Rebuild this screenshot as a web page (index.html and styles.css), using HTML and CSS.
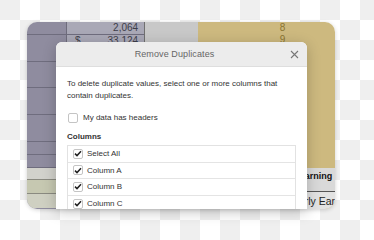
FILE: index.html
```html
<!DOCTYPE html>
<html>
<head>
<meta charset="utf-8">
<link rel="stylesheet" href="styles.css">
</head>
<body>
<div class="stage">
  <div class="sheet">
    <div class="col c1">
      <div class="cell h13"></div>
      <div class="cell h27"></div>
      <div class="cell h26"></div>
      <div class="cell h27"></div>
      <div class="cell h27"></div>
      <div class="cell h13"></div>
      <div class="cell h13"></div>
      <div class="cell h13 g1"></div>
      <div class="cell h14 g2"></div>
      <div class="cell h14 g3"></div>
    </div>
    <div class="col c2">
      <div class="cell h13 num">2,064</div>
      <div class="cell h13 num"><span class="cur">$</span>33,124</div>
    </div>
    <div class="col c3"></div>
    <div class="col c4">
      <div class="yellow">
        <div class="ynum">8</div>
        <div class="ynum">9</div>
      </div>
      <div class="foot1">Earning</div>
      <div class="foot2">Early Ear</div>
    </div>
  </div>

  <div class="dialog">
    <div class="dhead">
      <span class="dtitle">Remove Duplicates</span>
      <span class="dclose">
        <svg width="9" height="9" viewBox="0 0 9 9"><path d="M1 1L8 8M8 1L1 8" stroke="#777" stroke-width="1.1" fill="none"/></svg>
      </span>
    </div>
    <div class="dbody">
      <p class="desc">To delete duplicate values, select one or more columns that contain duplicates.</p>
      <label class="opt"><span class="box"></span>My data has headers</label>
      <div class="colhead">Columns</div>
      <div class="list">
        <div class="row"><span class="box on"><svg width="8" height="7" viewBox="0 0 8 7"><path d="M1 3.6L3 5.6L7 1.2" stroke="#222" stroke-width="1.5" fill="none"/></svg></span>Select All</div>
        <div class="row"><span class="box on"><svg width="8" height="7" viewBox="0 0 8 7"><path d="M1 3.6L3 5.6L7 1.2" stroke="#222" stroke-width="1.5" fill="none"/></svg></span>Column A</div>
        <div class="row"><span class="box on"><svg width="8" height="7" viewBox="0 0 8 7"><path d="M1 3.6L3 5.6L7 1.2" stroke="#222" stroke-width="1.5" fill="none"/></svg></span>Column B</div>
        <div class="row"><span class="box on"><svg width="8" height="7" viewBox="0 0 8 7"><path d="M1 3.6L3 5.6L7 1.2" stroke="#222" stroke-width="1.5" fill="none"/></svg></span>Column C</div>
      </div>
    </div>
  </div>
</div>
</body>
</html>
```

FILE: styles.css
```css
html, body {
  margin: 0;
  padding: 0;
}
body {
  width: 374px;
  height: 240px;
  overflow: hidden;
  background: conic-gradient(#ffffff 25%, #efefef 0 50%, #ffffff 0 75%, #efefef 0);
  background-size: 40px 40px;
  font-family: "Liberation Sans", Arial, sans-serif;
}
.stage {
  position: relative;
  width: 374px;
  height: 240px;
  padding: 22px 0 0 27px;
  box-sizing: border-box;
}
.sheet {
  width: 308px;
  height: 187px;
  border-radius: 10px;
  overflow: hidden;
  display: flex;
  box-shadow: 0 1px 4px rgba(0,0,0,0.18);
}
.col {
  display: flex;
  flex-direction: column;
  height: 100%;
}
.c1 {
  width: 40px;
  background: #8f8c9f;
  border-right: 1px solid #6e6c7c;
}
.c2 {
  width: 79px;
  background: #a9a8b6;
  border-right: 1px solid #707070;
}
.c3 {
  width: 54px;
  background: #c8c8c8;
}
.c4 {
  flex: 1;
  background: #cdb97f;
}
.cell {
  box-sizing: border-box;
  border-bottom: 1px solid #6f6d7e;
}
.h13 { height: 13px; }
.h14 { height: 14px; }
.h26 { height: 26px; }
.h27 { height: 27px; }
.g1 { background: #d2d2cc; border-bottom-color: #8a8a80; height: 12px; }
.g2 { background: #c6c8b1; border-bottom-color: #8a8a80; }
.g3 { background: #cfd0c2; border-bottom: none; }
.num {
  font-size: 10px;
  color: #3e3e4a;
  text-align: right;
  padding-right: 6px;
  line-height: 12px;
  display: flex;
  justify-content: space-between;
  padding-left: 8px;
}
.num:first-child { justify-content: flex-end; }
.yellow {
  height: 146px;
}
.ynum {
  font-size: 10px;
  color: #8a7431;
  line-height: 12px;
  padding-left: 82px;
}
.foot1 {
  height: 24px;
  box-sizing: border-box;
  background: #d9d9d9;
  border-bottom: 1px solid #555;
  font-weight: bold;
  font-size: 9px;
  color: #111;
  line-height: 16px;
  padding-left: 101px;
  white-space: nowrap;
}
.foot2 {
  flex: 1;
  background: #e2e2e2;
  font-size: 10.5px;
  color: #222;
  line-height: 18px;
  padding-left: 94px;
  white-space: nowrap;
  overflow: hidden;
}
.dialog {
  position: absolute;
  left: 56px;
  top: 42px;
  width: 251px;
  height: 167px;
  background: #fff;
  border-radius: 6px 6px 0 0;
  box-shadow: 0 3px 14px rgba(0,0,0,0.22);
  overflow: hidden;
}
.dhead {
  height: 24px;
  background: #ececec;
  border-bottom: 1px solid #dedede;
  display: flex;
  align-items: center;
  justify-content: center;
  padding-right: 14px;
  position: relative;
}
.dtitle {
  font-size: 9px;
  color: #666;
  letter-spacing: 0.1px;
}
.dclose {
  position: absolute;
  right: 8px;
  top: 8px;
  width: 9px;
  height: 9px;
  display: flex;
}
.dbody {
  padding: 11px 11px 0 11px;
}
.desc {
  margin: 0;
  font-size: 8px;
  line-height: 12px;
  color: #333;
}
.opt {
  display: flex;
  align-items: center;
  gap: 5px;
  margin-top: 10px;
  margin-left: 1px;
  font-size: 8px;
  color: #333;
  height: 11px;
}
.box {
  width: 10px;
  height: 10px;
  border: 1px solid #c4c4c4;
  border-radius: 2px;
  box-sizing: border-box;
  background: #fff;
  display: flex;
  align-items: center;
  justify-content: center;
  flex: none;
}
.colhead {
  margin-top: 8px;
  font-size: 8px;
  font-weight: bold;
  color: #333;
  line-height: 12px;
}
.list {
  margin-top: 2px;
  border: 1px solid #e2e2e2;
  width: 229px;
  box-sizing: border-box;
}
.row {
  height: 16.6px;
  box-sizing: border-box;
  border-bottom: 1px solid #e4e4e4;
  display: flex;
  align-items: center;
  gap: 4px;
  padding-left: 5px;
  font-size: 8px;
  color: #333;
}
```
